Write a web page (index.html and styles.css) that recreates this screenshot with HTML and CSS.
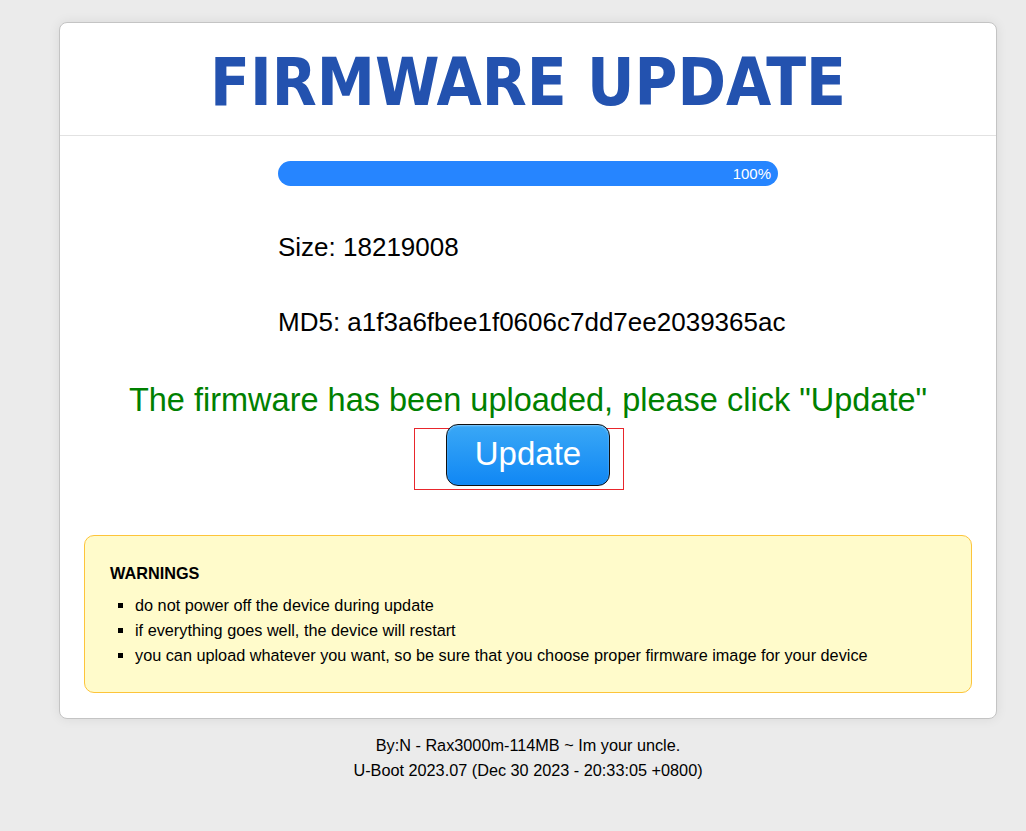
FILE: index.html
```html
<!DOCTYPE html>
<html lang="en">
<head>
  <meta charset="UTF-8">
  <title>Firmware Update</title>
  <link rel="stylesheet" href="styles.css">
</head>
<body>

  <div class="page">
    <div class="card">
      <header>
        <h1>FIRMWARE UPDATE</h1>
      </header>

      <div class="content">
        <div class="progress">
          <div class="bar" style="width: 100%;">100%</div>
        </div>

        <div class="info">
          <p>Size: 18219008</p>
          <p>MD5: a1f3a6fbee1f0606c7dd7ee2039365ac</p>
        </div>

        <div class="done">The firmware has been uploaded, please click "Update"</div>

        <form class="update-form">
          <button type="button" class="update-btn">Update</button>
        </form>

        <div class="warnings">
          <strong>WARNINGS</strong>
          <ul>
            <li>do not power off the device during update</li>
            <li>if everything goes well, the device will restart</li>
            <li>you can upload whatever you want, so be sure that you choose proper firmware image for your device</li>
          </ul>
        </div>
      </div>
    </div>

    <footer>
      <div>By:N - Rax3000m-114MB ~ Im your uncle.</div>
      <div>U-Boot 2023.07 (Dec 30 2023 - 20:33:05 +0800)</div>
    </footer>
  </div>

</body>
</html>
```

FILE: styles.css
```css
body {
  margin: 0;
  padding: 22px 0 0;
  font-family: "Liberation Sans", Arial, sans-serif;
  background: #ebebeb;
  color: #000;
}

.page {
  width: 938px;
  margin-left: 59px;
}

.card {
  background: #fff;
  border: 1px solid #c4c4c4;
  border-radius: 8px;
  box-shadow: 0 0 12px rgba(0,0,0,0.08);
}

header {
  border-bottom: 1px solid #e2e2e2;
  text-align: center;
  height: 112px;
}

header h1 {
  margin: 0;
  padding-top: 25px;
  font-family: "DejaVu Sans Condensed", "DejaVu Sans", Verdana, sans-serif;
  font-stretch: condensed;
  font-size: 65px;
  line-height: 70px;
  font-weight: bold;
  color: #2352af;
}

.content {
  padding: 25px 24px 25px;
}

.progress {
  width: 500px;
  height: 25px;
  margin: 0 auto;
  border-radius: 13px;
  background: #e8e8e8;
  overflow: hidden;
}

.bar {
  height: 100%;
  background: #2685ff;
  color: #fff;
  font-size: 15px;
  line-height: 25px;
  text-align: right;
  padding-right: 7px;
  box-sizing: border-box;
}

.info {
  width: 500px;
  margin: 0 auto;
  font-size: 26px;
  white-space: nowrap;
}

.info p {
  margin: 0;
  padding-top: 48px;
  line-height: 27px;
}

.done {
  margin-top: 47px;
  text-align: center;
  color: #008000;
  font-size: 32.5px;
  line-height: 34px;
}

.update-form {
  width: 208px;
  height: 60px;
  margin: 11px 0 0 330px;
  border: 1px solid #e8262c;
  position: relative;
}

.update-btn {
  position: absolute;
  left: 31px;
  top: -5px;
  width: 164px;
  height: 62px;
  border: 1px solid #111;
  border-radius: 12px;
  background: linear-gradient(#3aa8f6, #1087f4);
  color: #fff;
  font-family: "Liberation Sans", Arial, sans-serif;
  font-size: 33px;
  padding: 0 0 2px;
  box-shadow: inset 0 1px 2px rgba(255,255,255,0.4);
}

.warnings {
  margin-top: 45px;
  padding: 28px 25px 24px;
  background: #fffbcb;
  border: 1px solid #fdc43a;
  border-radius: 10px;
  font-size: 16.25px;
}

.warnings strong {
  display: block;
  margin-bottom: 10px;
}

.warnings ul {
  margin: 0;
  padding-left: 25px;
  list-style: square;
}

.warnings li {
  line-height: 25px;
}

footer {
  text-align: center;
  font-size: 16.25px;
  line-height: 25px;
  padding: 14px 0 40px;
}
```
